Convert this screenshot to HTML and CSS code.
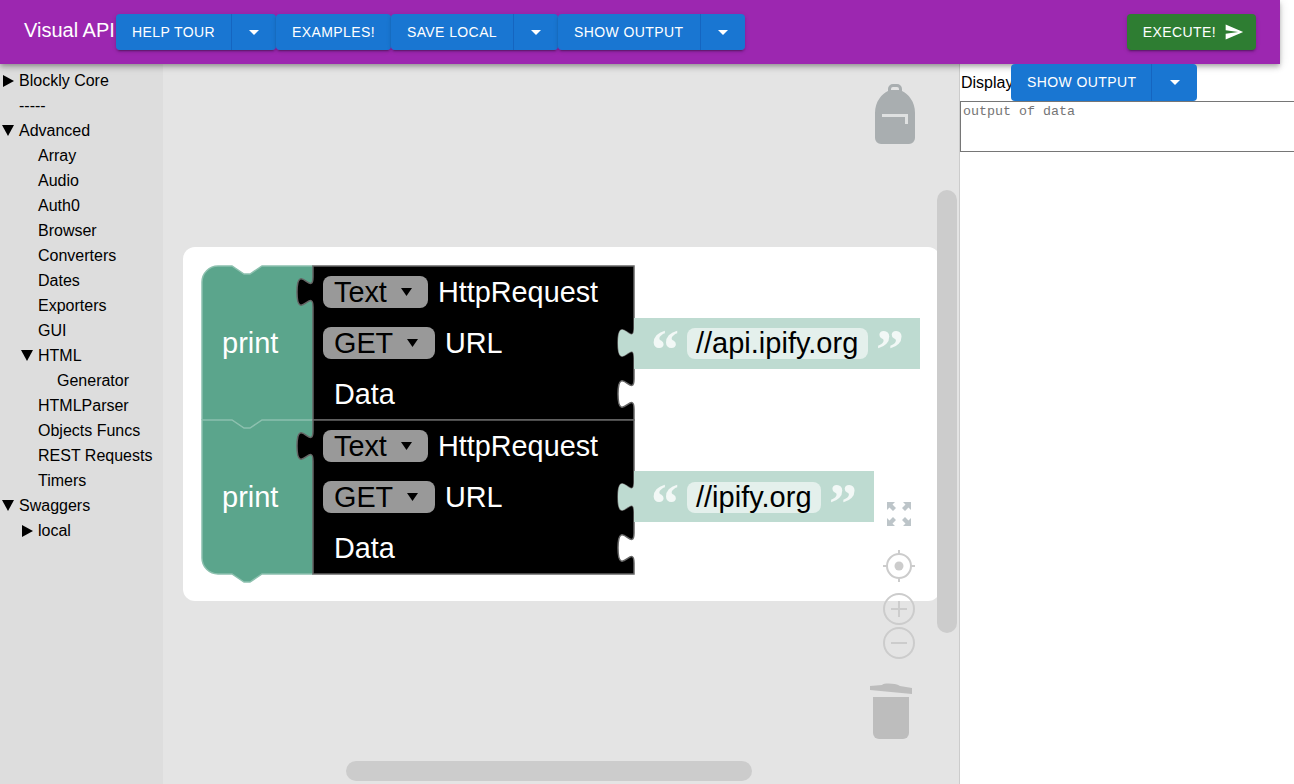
FILE: index.html
```html
<!DOCTYPE html>
<html lang="en">
<head>
    <meta charset="UTF-8">
    <meta name="viewport" content="width=device-width, initial-scale=1.0">
    <title>Visual API</title>
    <link rel="stylesheet" href="styles.css">
</head>
<body>
    <header class="topbar">
        <h1 class="title">Visual API</h1>
        <div class="btn-group">
            <button class="btn">HELP TOUR</button>
            <button class="btn btn-arrow"><span class="caret"></span></button>
        </div>
        <div class="btn-group">
            <button class="btn">EXAMPLES!</button>
        </div>
        <div class="btn-group">
            <button class="btn">SAVE LOCAL</button>
            <button class="btn btn-arrow"><span class="caret"></span></button>
        </div>
        <div class="btn-group">
            <button class="btn btn-wide">SHOW OUTPUT</button>
            <button class="btn btn-arrow"><span class="caret"></span></button>
        </div>
        <button class="btn btn-execute">EXECUTE!
            <svg class="send-icon" viewBox="0 0 24 24"><path d="M2.01 21L23 12 2.01 3 2 10l15 2-15 2z"/></svg>
        </button>
    </header>

    <main class="content">
        <!-- Toolbox tree -->
        <nav class="tree">
            <div class="row"><span class="toggle closed"></span>Blockly Core</div>
            <div class="row"><span class="toggle"></span>-----</div>
            <div class="row"><span class="toggle open"></span>Advanced</div>
            <div class="sub">
                <div class="row"><span class="toggle"></span>Array</div>
                <div class="row"><span class="toggle"></span>Audio</div>
                <div class="row"><span class="toggle"></span>Auth0</div>
                <div class="row"><span class="toggle"></span>Browser</div>
                <div class="row"><span class="toggle"></span>Converters</div>
                <div class="row"><span class="toggle"></span>Dates</div>
                <div class="row"><span class="toggle"></span>Exporters</div>
                <div class="row"><span class="toggle"></span>GUI</div>
                <div class="row"><span class="toggle open"></span>HTML</div>
                <div class="sub">
                    <div class="row"><span class="toggle"></span>Generator</div>
                </div>
                <div class="row"><span class="toggle"></span>HTMLParser</div>
                <div class="row"><span class="toggle"></span>Objects Funcs</div>
                <div class="row"><span class="toggle"></span>REST Requests</div>
                <div class="row"><span class="toggle"></span>Timers</div>
            </div>
            <div class="row"><span class="toggle open"></span>Swaggers</div>
            <div class="sub">
                <div class="row"><span class="toggle closed"></span>local</div>
            </div>
        </nav>

        <!-- Workspace, coordinates in the viewBox are page pixels -->
        <div class="workspace">
            <svg class="canvas" viewBox="163 64 796 720">
                <rect class="bubble" x="183" y="247" width="757" height="354" rx="12"/>

                <!-- first print block -->
                <g>
                    <path class="print" d="M202,282 a16,16 0 0 1 16,-16 H232 l12,8 h6 l12,-8 H313 V420 H262 l-12,8 h-6 l-12,-8 H202 Z"/>
                    <path class="print-edge" d="M202,420 V282 a16,16 0 0 1 16,-16 H232 l12,8 h6 l12,-8 H313"/>
                    <path class="request" d="M313,266 H634 V328 c0,20 -16,-16 -16,15 s16,-5 16,15 V379 c0,20 -16,-16 -16,15 s16,-5 16,15 V420 H313 V307 c0,-20 -16,16 -16,-15 s16,5 16,-15 Z"/>
                    <rect class="dropdown" x="323" y="276" width="105" height="32" rx="8"/>
                    <text class="field-small field-dark" x="334" y="302">Text</text>
                    <path class="arrow" d="M401,288 h11 l-5.500,8 Z"/>
                    <text class="field-small field-light" x="438" y="302">HttpRequest</text>
                    <rect class="dropdown" x="323" y="327" width="112" height="32" rx="8"/>
                    <text class="field-small field-dark" x="334" y="353">GET</text>
                    <path class="arrow" d="M407,339 h11 l-5.500,8 Z"/>
                    <text class="field-small field-light" x="445" y="353">URL</text>
                    <text class="field-small field-light" x="334" y="404">Data</text>
                    <text class="field-light" x="222" y="353">print</text>
                    <path class="string" d="M634,318 H920 V369 H634 V358 c0,-20 -16,16 -16,-15 s16,5 16,-15 Z"/>
                    <rect class="string-field" x="687" y="328" width="181" height="31" rx="8"/>
                    <text class="field-dark" x="696" y="353">//api.ipify.org</text>
                    <text class="quote" x="651" y="369">&#8220;</text>
                    <text class="quote" x="876" y="369">&#8221;</text>
                </g>

                <!-- second print block -->
                <g>
                    <path class="print" d="M202,420 H232 l12,8 h6 l12,-8 H313 V574 H262 l-12,8 h-6 l-12,-8 H218 a16,16 0 0 1 -16,-16 Z"/>
                    <path class="print-edge" d="M313,420 H262 l-12,8 h-6 l-12,-8 H202 V558 a16,16 0 0 0 16,16 H232 l12,8 h6 l12,-8 H313"/>
                    <path class="request" d="M313,420 H634 V482 c0,20 -16,-16 -16,15 s16,-5 16,15 V533 c0,20 -16,-16 -16,15 s16,-5 16,15 V574 H313 V461 c0,-20 -16,16 -16,-15 s16,5 16,-15 Z"/>
                    <rect class="dropdown" x="323" y="430" width="105" height="32" rx="8"/>
                    <text class="field-small field-dark" x="334" y="456">Text</text>
                    <path class="arrow" d="M401,442 h11 l-5.500,8 Z"/>
                    <text class="field-small field-light" x="438" y="456">HttpRequest</text>
                    <rect class="dropdown" x="323" y="481" width="112" height="32" rx="8"/>
                    <text class="field-small field-dark" x="334" y="507">GET</text>
                    <path class="arrow" d="M407,493 h11 l-5.500,8 Z"/>
                    <text class="field-small field-light" x="445" y="507">URL</text>
                    <text class="field-small field-light" x="334" y="558">Data</text>
                    <text class="field-light" x="222" y="507">print</text>
                    <path class="string" d="M634,471 H874 V522 H634 V512 c0,-20 -16,16 -16,-15 s16,5 16,-15 Z"/>
                    <rect class="string-field" x="687" y="482" width="134" height="31" rx="8"/>
                    <text class="field-dark" x="696" y="507">//ipify.org</text>
                    <text class="quote" x="651" y="523">&#8220;</text>
                    <text class="quote" x="829" y="523">&#8221;</text>
                </g>

                <!-- backpack -->
                <path class="backpack" d="M875,113 C875,101 882,94 888,91 V89 a5,5 0 0 1 5,-5 h4 a5,5 0 0 1 5,5 V91 C908,94 915,101 915,113 V138 a6,6 0 0 1 -6,6 H881 a6,6 0 0 1 -6,-6 Z M891,90 h8 v-1 a2,2 0 0 0 -2,-2 h-4 a2,2 0 0 0 -2,2 Z"/>
                <path class="backpack-mark" d="M882,114 H908 V124 H905 V117 H882 Z"/>

                <!-- zoom controls -->
                <path class="expand" d="M887,502 h8 l-2.500,2.500 3.500,3.500 -3,3 -3.500,-3.500 -2.500,2.500 Z M911,502 v8 l-2.500,-2.500 -3.500,3.500 -3,-3 3.500,-3.500 -2.500,-2.500 Z M887,526 v-8 l2.500,2.500 3.500,-3.500 3,3 -3.500,3.500 2.500,2.500 Z M911,526 h-8 l2.500,-2.500 -3.500,-3.500 3,-3 3.500,3.500 2.500,-2.500 Z"/>
                <circle class="ctl" cx="899" cy="566" r="12"/>
                <circle class="ctl-dot" cx="899" cy="566" r="4.500"/>
                <path class="ctl" d="M899,550 v4 M899,578 v4 M883,566 h4 M911,566 h4"/>
                <circle class="ctl" cx="899" cy="609" r="15"/>
                <path class="ctl" d="M899,601 v16 M891,609 h16"/>
                <circle class="ctl" cx="899" cy="643" r="15"/>
                <path class="ctl" d="M891,643 h16"/>

                <!-- trash -->
                <path class="trash" d="M873,697 H909 V733 a6,6 0 0 1 -6,6 H879 a6,6 0 0 1 -6,-6 Z"/>
                <path class="trash" d="M870,686 L882,685 C884,683 895,683 900,686 L912,688 V694 L870,690 Z"/>

                <!-- scrollbars -->
                <rect class="scroll" x="937" y="190" width="20" height="443" rx="10"/>
                <rect class="scroll" x="346" y="761" width="406" height="20" rx="10"/>
            </svg>
        </div>

        <!-- Output panel -->
        <section class="output">
            <div class="output-head">
                <span class="output-label">Display</span>
                <div class="btn-group btn-group-flat">
                    <button class="btn">SHOW OUTPUT</button>
                    <button class="btn btn-arrow btn-arrow-wide"><span class="caret"></span></button>
                </div>
            </div>
            <textarea class="output-text" placeholder="output of data"></textarea>
        </section>
    </main>
</body>
</html>
```

FILE: styles.css
```css
html, body {
    margin: 0;
    padding: 0;
    height: 100%;
    overflow: hidden;
}
body {
    font-family: "Liberation Sans", Arial, sans-serif;
    background-color: #fff;
    color: #000;
}
.topbar {
    position: relative;
    z-index: 2;
    display: flex;
    align-items: center;
    width: 1280px;
    height: 64px;
    padding-left: 24px;
    box-sizing: border-box;
    background: #9c27b0;
    box-shadow: 0 2px 4px -1px rgba(0,0,0,.2), 0 4px 5px 0 rgba(0,0,0,.14), 0 1px 10px 0 rgba(0,0,0,.12);
}
.title {
    width: 92px;
    margin: 0 0 4px;
    font-size: 20px;
    font-weight: normal;
    white-space: nowrap;
    color: #fff;
}
.btn-group {
    display: flex;
    height: 36px;
    border-radius: 4px;
    box-shadow: 0 3px 1px -2px rgba(0,0,0,.2), 0 2px 2px 0 rgba(0,0,0,.14), 0 1px 5px 0 rgba(0,0,0,.12);
}
.btn {
    height: 100%;
    padding: 0 16px;
    border: none;
    border-radius: 4px;
    background-color: #1976d2;
    color: #fff;
    font-family: inherit;
    font-size: 14px;
    letter-spacing: .4px;
    white-space: nowrap;
    cursor: pointer;
}
.btn-group .btn:not(:last-child) {
    border-right: 1px solid #1565c0;
    border-radius: 4px 0 0 4px;
}
.btn-wide {
    padding: 0 17px 0 16px;
}
.btn-arrow {
    display: flex;
    align-items: center;
    justify-content: center;
    width: 44px;
    padding: 0;
    border-radius: 0 4px 4px 0;
}
.btn-arrow-wide {
    width: 45px;
}
.caret {
    width: 0;
    height: 0;
    border-left: 5px solid transparent;
    border-right: 5px solid transparent;
    border-top: 5px solid #fff;
}
.btn-execute {
    display: flex;
    align-items: center;
    gap: 8px;
    height: 36px;
    margin-left: auto;
    margin-right: 24px;
    padding-right: 12px;
    background-color: #2e7d32;
    box-shadow: 0 3px 1px -2px rgba(0,0,0,.2), 0 2px 2px 0 rgba(0,0,0,.14), 0 1px 5px 0 rgba(0,0,0,.12);
}
.send-icon {
    width: 20px;
    height: 20px;
    fill: #fff;
}
.content {
    display: flex;
    height: 720px;
}
.tree {
    width: 163px;
    flex-shrink: 0;
    padding-top: 4px;
    box-sizing: border-box;
    background: #ddd;
    font-size: 16px;
}
.row {
    display: flex;
    align-items: center;
    height: 25px;
    white-space: nowrap;
}
.toggle {
    width: 19px;
    flex-shrink: 0;
}
.toggle.closed::before, .toggle.open::before {
    content: "";
    display: block;
    width: 0;
    height: 0;
}
.toggle.closed::before {
    margin-left: 3px;
    border-top: 6px solid transparent;
    border-bottom: 6px solid transparent;
    border-left: 11px solid #000;
}
.toggle.open::before {
    margin-left: 2px;
    border-left: 6.500px solid transparent;
    border-right: 6.500px solid transparent;
    border-top: 11px solid #000;
}
.sub {
    padding-left: 19px;
}
.workspace {
    width: 796px;
    flex-shrink: 0;
    border-right: 1px solid #ccc;
    background: #e4e4e4;
}
.canvas {
    display: block;
    width: 796px;
    height: 720px;
}
.bubble {
    fill: #fff;
}
.print {
    fill: #5ba58c;
}
.print-edge {
    fill: none;
    stroke: #8cc0ae;
    stroke-width: 1.500;
}
.request {
    fill: #000;
    stroke: #666;
    stroke-width: 1.500;
}
.dropdown {
    fill: #999;
}
.arrow {
    fill: #000;
}
.field-dark, .field-light {
    font-family: "Liberation Sans", Arial, sans-serif;
    font-size: 29px;
}
.field-small {
    font-size: 28.8px;
}
.field-dark {
    fill: #000;
}
.field-light {
    fill: #fff;
}
.string {
    fill: #bedbd1;
}
.string-field {
    fill: #e4f0ec;
}
.quote {
    font-family: "Liberation Serif", serif;
    font-weight: bold;
    font-size: 56px;
    fill: #fff;
    fill-opacity: .8;
}
.backpack {
    fill: #a9aeb0;
    fill-rule: evenodd;
}
.backpack-mark {
    fill: #dfe1e1;
}
.expand {
    fill: #bdc5c9;
}
.ctl {
    fill: none;
    stroke: #ccc;
    stroke-width: 2;
}
.ctl-dot {
    fill: #ccc;
}
.trash {
    fill: #bdbdbd;
}
.scroll {
    fill: #ccc;
}
.output {
    position: relative;
    z-index: 3;
    flex: 1;
    min-width: 0;
}
.output-head {
    display: flex;
    align-items: center;
    height: 37px;
    padding-left: 1px;
}
.output-label {
    width: 50px;
    flex-shrink: 0;
    white-space: nowrap;
}
.btn-group-flat {
    height: 37px;
    box-shadow: none;
}
.btn-group-flat .btn:first-child {
    padding: 0 15px 2px 16px;
}
.output-text {
    display: block;
    width: 100%;
    height: 51px;
    margin: 0;
    padding: 2px;
    box-sizing: border-box;
    border: 1px solid #767676;
    border-right: none;
    border-radius: 0;
    resize: none;
    font-family: "Liberation Mono", monospace;
    font-size: 13.33px;
}
```
